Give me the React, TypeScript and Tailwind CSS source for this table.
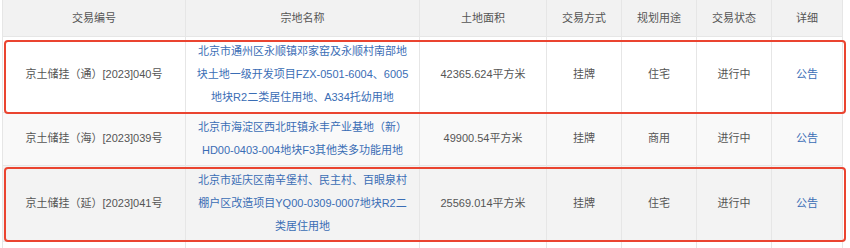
import React from 'react';

type Row = {
  code: string,
  name: string[],
  area: string,
  method: string,
  usage: string,
  status: string,
  bg: string,
};

const rows: Row[] = [
  {
    code: "京土储挂（通）[2023]040号",
    name: ["北京市通州区永顺镇邓家窑及永顺村南部地", "块土地一级开发项目FZX-0501-6004、6005", "地块R2二类居住用地、A334托幼用地"],
    area: "42365.624平方米", method: "挂牌", usage: "住宅", status: "进行中",
    bg: "bg-white",
  },
  {
    code: "京土储挂（海）[2023]039号",
    name: ["北京市海淀区西北旺镇永丰产业基地（新）", "HD00-0403-004地块F3其他类多功能用地"],
    area: "49900.54平方米", method: "挂牌", usage: "商用", status: "进行中",
    bg: "bg-[#f9f9f9]",
  },
  {
    code: "京土储挂（延）[2023]041号",
    name: ["北京市延庆区南辛堡村、民主村、百眼泉村", "棚户区改造项目YQ00-0309-0007地块R2二", "类居住用地"],
    area: "25569.014平方米", method: "挂牌", usage: "住宅", status: "进行中",
    bg: "bg-[#f3f3f3]",
  },
];

const headers = ["交易编号", "宗地名称", "土地面积", "交易方式", "规划用途", "交易状态", "详细"];
const widths = ["w-[183px]", "w-[234px]", "w-[127px]", "w-[75px]", "w-[75px]", "w-[75px]", "w-[71px]"];

export default function App(): React.ReactElement {
  const cell = "border-r border-b border-[#e6e6e6] text-center align-middle py-[3px] px-[6px] leading-[23px]";
  return (
    <div className="w-[850px] h-[248px] overflow-hidden bg-white pl-[2px] text-[11px] text-[#555]"
      style={{ fontFamily: '"Liberation Sans", "Noto Sans CJK SC", sans-serif' }}
    >
      <div className="relative w-[840px]">
        <table className="table-fixed border-collapse w-[840px] border-l border-[#e6e6e6]">
          <colgroup>
            {widths.map((w, i) => <col key={i} className={w} />)}
          </colgroup>
          <thead>
            <tr className="bg-[#f2f2f2] h-[36px]">
              {headers.map(h => (
                <th key={h} className="border-r border-b border-[#e6e6e6] font-normal text-center text-[#555]">{h}</th>
              ))}
            </tr>
          </thead>
          <tbody>
            {rows.map(r => (
              <tr key={r.code} className={r.bg}>
                <td className={cell}>{r.code}</td>
                <td className={cell + " text-[#3a6db5]"}>
                  {r.name.map(l => <div key={l} className="whitespace-nowrap">{l}</div>)}
                </td>
                <td className={cell}>{r.area}</td>
                <td className={cell}>{r.method}</td>
                <td className={cell}>{r.usage}</td>
                <td className={cell}>{r.status}</td>
                <td className={cell + " text-[#3a6db5]"}>公告</td>
              </tr>
            ))}
            <tr className="bg-white h-[30px]">
              {headers.map(h => <td key={h} className="border-r border-[#e6e6e6]"></td>)}
            </tr>
          </tbody>
        </table>
        {/* annotation boxes */}
        <div className="absolute left-[2px] top-[40px] w-[842px] h-[74px] border-2 border-[#ea4430] rounded-[4px]" />
        <div className="absolute left-[2px] top-[167px] w-[842px] h-[75px] border-2 border-[#ea4430] rounded-[4px]" />
      </div>
    </div>
  );
}
